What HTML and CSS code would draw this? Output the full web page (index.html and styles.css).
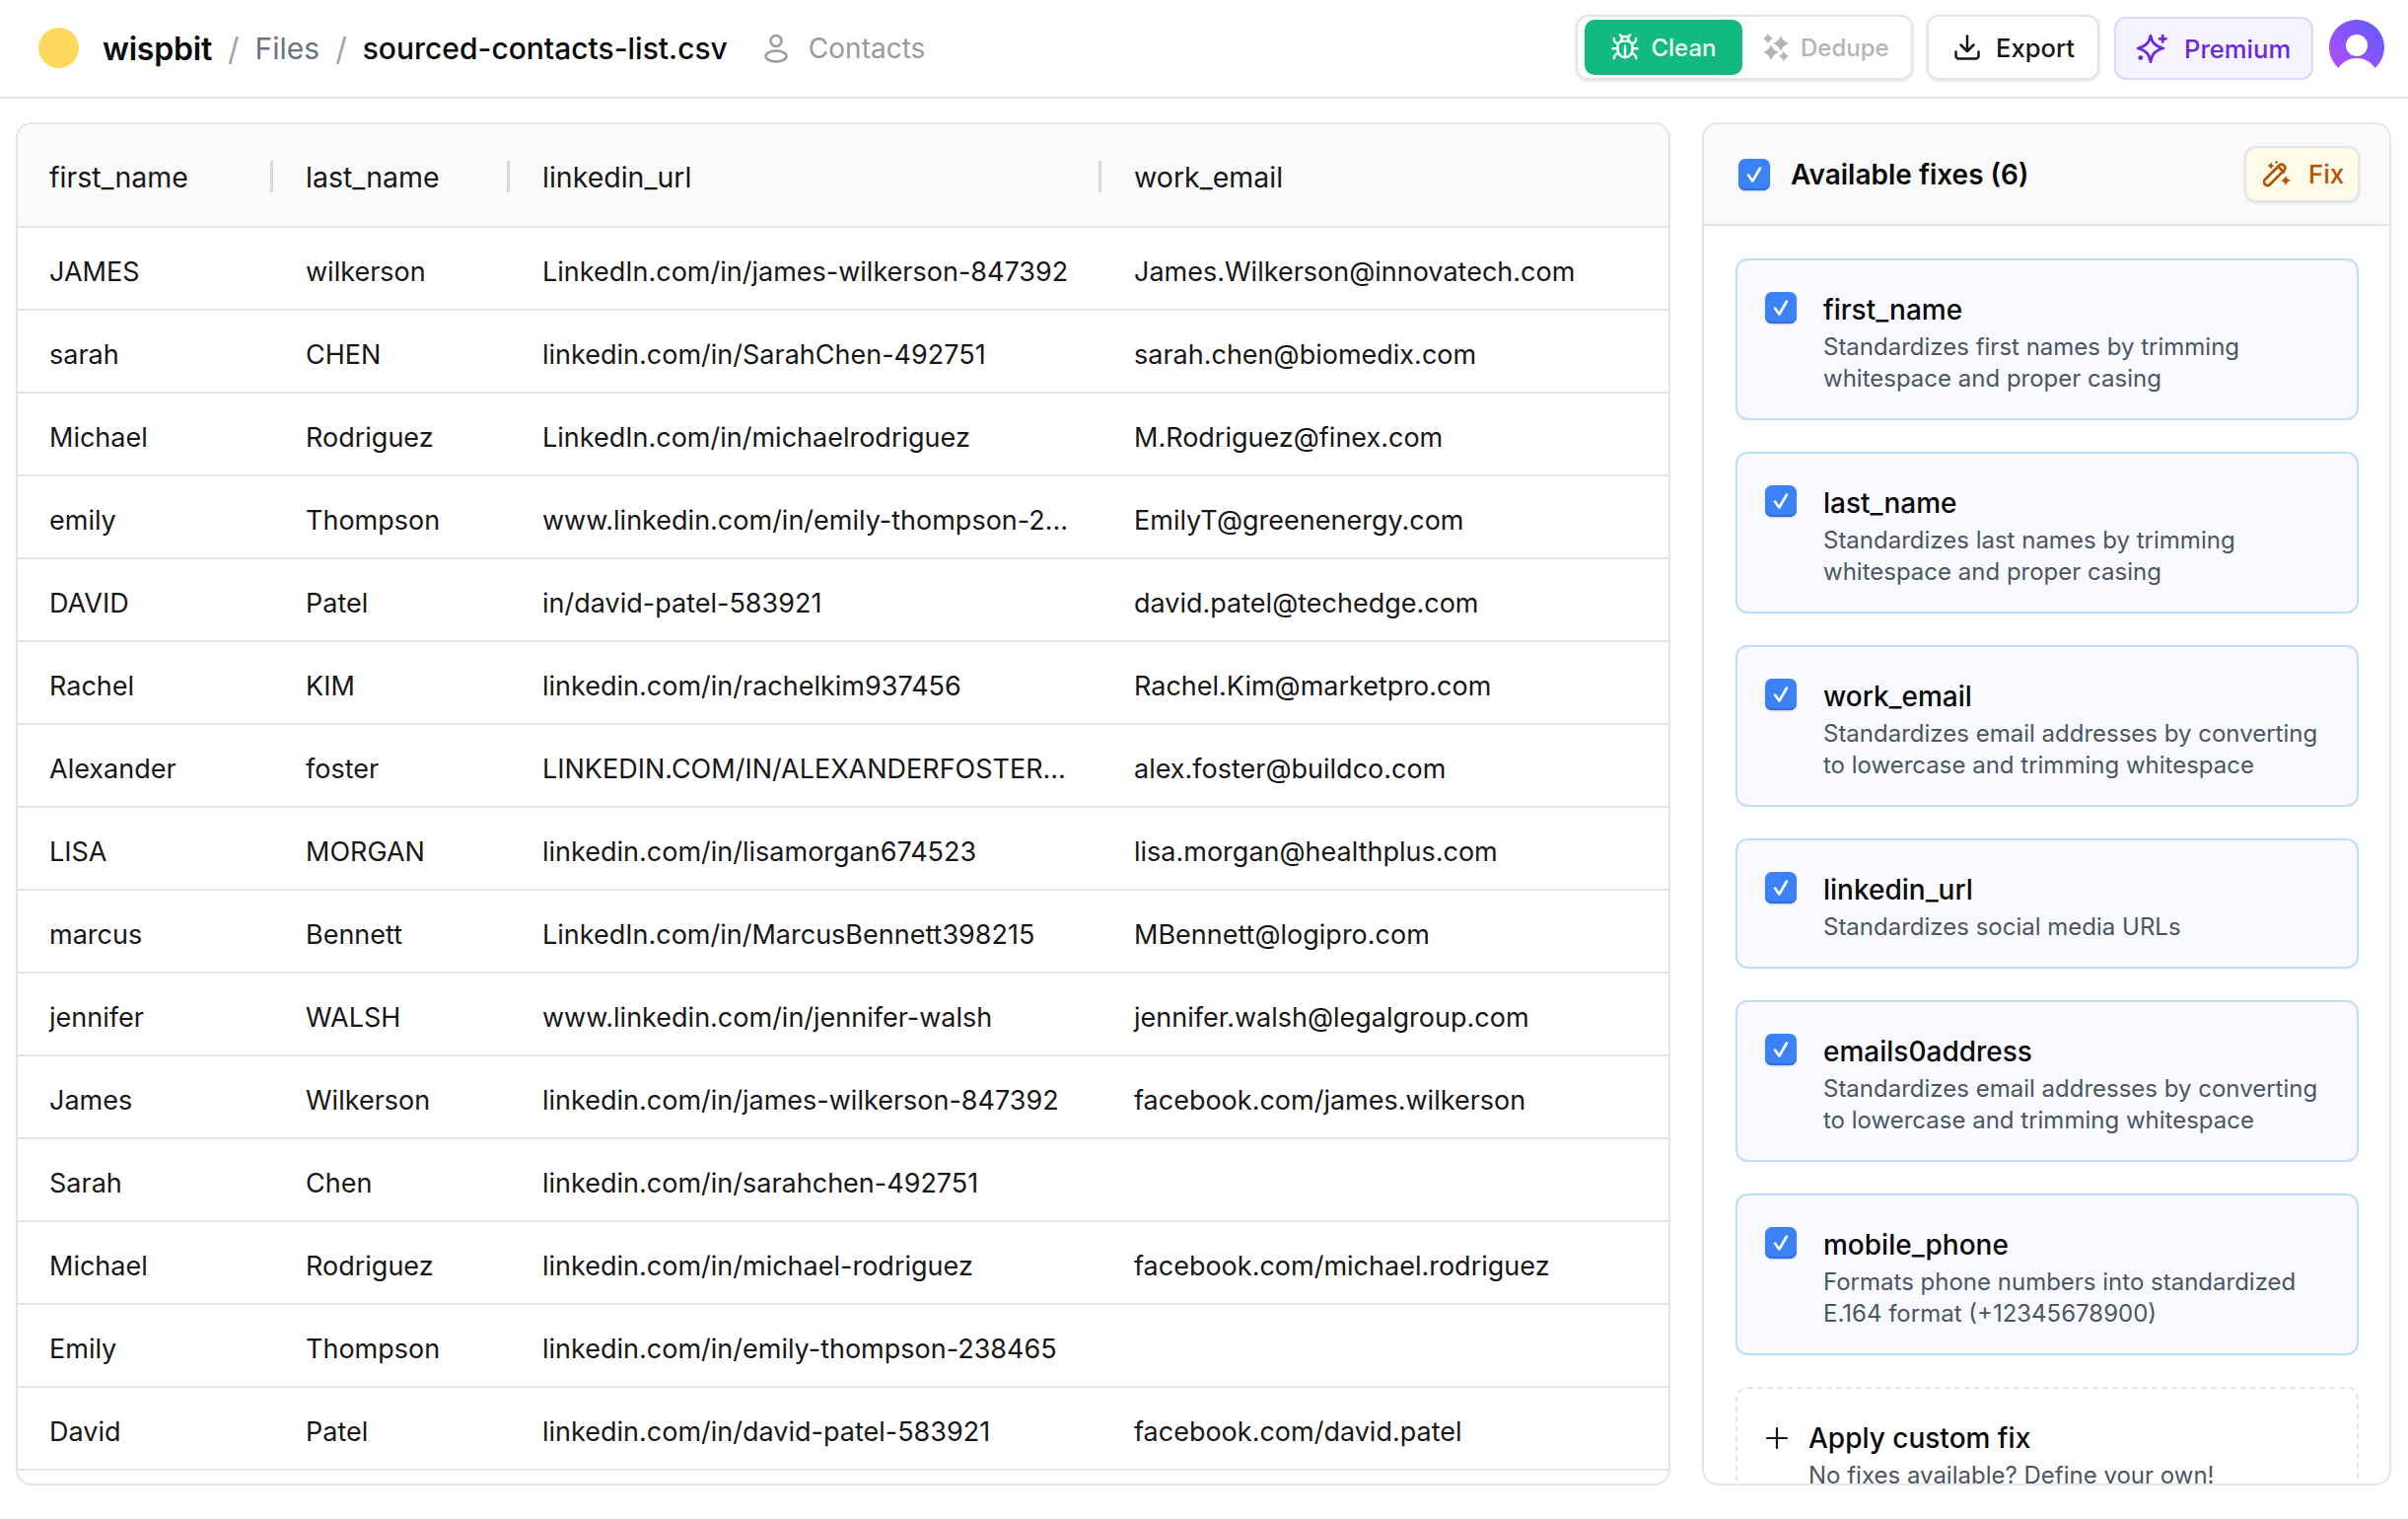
FILE: index.html
```html
<!DOCTYPE html>
<html>

<head>
    <meta charset="utf-8" />
    <title>sourced-contacts-list.csv</title>
    <link rel="stylesheet" href="styles.css">
</head>

<body>

<header class="topbar">
    <div class="crumbs">
        <span class="logo"></span>
        <span class="brand">wispbit</span>
        <span class="slash">/</span>
        <span class="crumb-link">Files</span>
        <span class="slash">/</span>
        <span class="crumb-file">sourced-contacts-list.csv</span>
        <span class="contacts">
            <svg class="icon-user" viewBox="0 0 24 30" fill="none" stroke="currentColor" stroke-width="2.400">
                <circle cx="12" cy="7.500" r="5.500"/>
                <ellipse cx="12" cy="23" rx="10.500" ry="5.500"/>
            </svg>
            Contacts
        </span>
    </div>
    <div class="actions">
        <div class="toggle">
            <div class="toggle-on">
                <svg class="icon-bug" viewBox="0 0 24 24" fill="none" stroke="currentColor" stroke-width="2" stroke-linecap="round" stroke-linejoin="round">
                    <path d="m8 2 1.880 1.880"/><path d="M14.120 3.880 16 2"/><path d="M9 7.130v-1a3 3 0 1 1 6 0v1"/>
                    <path d="M12 20c-3.300 0-6-2.700-6-6v-3a4 4 0 0 1 4-4h4a4 4 0 0 1 4 4v3c0 3.300-2.700 6-6 6"/>
                    <path d="M12 20v-9"/><path d="M6.530 9C4.600 8.800 3 7.100 3 5"/><path d="M6 13H2"/><path d="M3 21c0-2.100 1.700-3.900 3.800-4"/>
                    <path d="M20.970 5c0 2.100-1.600 3.800-3.500 4"/><path d="M22 13h-4"/><path d="M17.200 17c2.100.1 3.800 1.900 3.800 4"/>
                </svg>
                Clean
            </div>
            <div class="toggle-off">
                <svg class="icon-dedupe" viewBox="0 0 26 28" fill="currentColor">
                    <path d="M5 0Q6.500 3.500 10 5 6.500 6.500 5 10 3.500 6.500 0 5 3.500 3.500 5 0z"/>
                    <path d="M18 2Q20 8 26 10 20 12 18 18 16 12 10 10 16 8 18 2z"/>
                    <path d="M8 11Q10 17 16 19 10 21 8 27 6 21 0 19 6 17 8 11z"/>
                    <path d="M21 18Q22.500 21.500 26 23 22.500 24.500 21 28 19.500 24.500 16 23 19.500 21.500 21 18z"/>
                </svg>
                Dedupe
            </div>
        </div>
        <div class="btn btn-export">
            <svg class="icon-export" viewBox="0 0 26 26" fill="none" stroke="currentColor" stroke-width="2.500" stroke-linecap="round" stroke-linejoin="round">
                <path d="M13 1.500v15"/><path d="m6.500 10.500 6.500 6.500 6.500-6.500"/>
                <path d="M1.500 17.500v4a3 3 0 0 0 3 3h17a3 3 0 0 0 3-3v-4"/>
            </svg>
            Export
        </div>
        <div class="btn btn-premium">
            <svg class="icon-premium" viewBox="0 0 30 30" fill="none" stroke="currentColor" stroke-width="2.600" stroke-linecap="round" stroke-linejoin="round">
                <path d="M14 3C15.500 10 18.500 13 26 15 18.500 17 15.500 20 14 28 12.500 20 9.500 17 2 15 9.500 13 12.500 10 14 3z"/>
                <path d="M25.500 3v6M22.500 6h6"/>
                <circle cx="4.500" cy="24" r="1" fill="currentColor"/>
            </svg>
            Premium
        </div>
        <svg class="avatar" viewBox="0 0 56 50">
            <defs>
                <linearGradient id="avatarFill" x1="0" y1="1" x2="1" y2="0">
                    <stop offset="0" stop-color="#b44df5"/>
                    <stop offset="1" stop-color="#5b5cff"/>
                </linearGradient>
            </defs>
            <path fill="url(#avatarFill)" d="M9.500 49A28 28 0 1 1 46.500 49C42 42 35 39 28 39S14 42 9.500 49z"/>
            <circle cx="28" cy="26" r="11" fill="#fff"/>
        </svg>
    </div>
</header>

<main class="content">
    <section class="panel table-panel">
        <table class="sheet">
            <colgroup>
                <col class="col-first"><col class="col-last"><col class="col-url"><col>
            </colgroup>
            <thead>
                <tr>
                    <th><div class="th-in">first_name<i></i></div></th>
                    <th><div class="th-in">last_name<i></i></div></th>
                    <th><div class="th-in">linkedin_url<i></i></div></th>
                    <th><div class="th-in">work_email</div></th>
                </tr>
            </thead>
            <tbody>
                <tr><td>JAMES</td><td>wilkerson</td><td>LinkedIn.com/in/james-wilkerson-847392</td><td>James.Wilkerson@innovatech.com</td></tr>
                <tr><td>sarah</td><td>CHEN</td><td>linkedin.com/in/SarahChen-492751</td><td>sarah.chen@biomedix.com</td></tr>
                <tr><td>Michael</td><td>Rodriguez</td><td>LinkedIn.com/in/michaelrodriguez</td><td>M.Rodriguez@finex.com</td></tr>
                <tr><td>emily</td><td>Thompson</td><td>www.linkedin.com/in/emily-thompson-238465</td><td>EmilyT@greenenergy.com</td></tr>
                <tr><td>DAVID</td><td>Patel</td><td>in/david-patel-583921</td><td>david.patel@techedge.com</td></tr>
                <tr><td>Rachel</td><td>KIM</td><td>linkedin.com/in/rachelkim937456</td><td>Rachel.Kim@marketpro.com</td></tr>
                <tr><td>Alexander</td><td>foster</td><td>LINKEDIN.COM/IN/ALEXANDERFOSTER165</td><td>alex.foster@buildco.com</td></tr>
                <tr><td>LISA</td><td>MORGAN</td><td>linkedin.com/in/lisamorgan674523</td><td>lisa.morgan@healthplus.com</td></tr>
                <tr><td>marcus</td><td>Bennett</td><td>LinkedIn.com/in/MarcusBennett398215</td><td>MBennett@logipro.com</td></tr>
                <tr><td>jennifer</td><td>WALSH</td><td>www.linkedin.com/in/jennifer-walsh</td><td>jennifer.walsh@legalgroup.com</td></tr>
                <tr><td>James</td><td>Wilkerson</td><td>linkedin.com/in/james-wilkerson-847392</td><td>facebook.com/james.wilkerson</td></tr>
                <tr><td>Sarah</td><td>Chen</td><td>linkedin.com/in/sarahchen-492751</td><td></td></tr>
                <tr><td>Michael</td><td>Rodriguez</td><td>linkedin.com/in/michael-rodriguez</td><td>facebook.com/michael.rodriguez</td></tr>
                <tr><td>Emily</td><td>Thompson</td><td>linkedin.com/in/emily-thompson-238465</td><td></td></tr>
                <tr><td>David</td><td>Patel</td><td>linkedin.com/in/david-patel-583921</td><td>facebook.com/david.patel</td></tr>
            </tbody>
        </table>
    </section>

    <aside class="panel fixes-panel">
        <div class="fixes-head">
            <div class="fixes-title">
                <span class="check"><svg viewBox="0 0 24 24"><path d="M6.500 12.500 10.500 18 17.500 6"/></svg></span>
                Available fixes (6)
            </div>
            <div class="btn-fix">
                <svg class="icon-wand" viewBox="0 0 28 28" fill="none" stroke="currentColor" stroke-width="2.700" stroke-linecap="round" stroke-linejoin="round">
                    <rect x="-2" y="-3.500" width="27" height="7" rx="3" transform="translate(3.500 22.500) rotate(-45)"/>
                    <path d="m17 7.500 4 4"/>
                    <path fill="currentColor" stroke="none" d="M8 1.500Q8.800 4.200 11.500 5 8.800 5.800 8 8.500 7.200 5.800 4.500 5 7.200 4.200 8 1.500z"/>
                    <path fill="currentColor" stroke="none" d="M23 15Q24.200 18.800 28 20 24.200 21.200 23 25 21.800 21.200 18 20 21.800 18.800 23 15z"/>
                    <circle cx="13.500" cy="1.500" r="1.200" fill="currentColor" stroke="none"/>
                </svg>
                Fix
            </div>
        </div>
        <div class="fixes-list">
            <div class="fix-card">
                <span class="check"><svg viewBox="0 0 24 24"><path d="M6.500 12.500 10.500 18 17.500 6"/></svg></span>
                <div>
                    <div class="fix-name">first_name</div>
                    <div class="fix-desc">Standardizes first names by trimming<br>whitespace and proper casing</div>
                </div>
            </div>
            <div class="fix-card">
                <span class="check"><svg viewBox="0 0 24 24"><path d="M6.500 12.500 10.500 18 17.500 6"/></svg></span>
                <div>
                    <div class="fix-name">last_name</div>
                    <div class="fix-desc">Standardizes last names by trimming<br>whitespace and proper casing</div>
                </div>
            </div>
            <div class="fix-card">
                <span class="check"><svg viewBox="0 0 24 24"><path d="M6.500 12.500 10.500 18 17.500 6"/></svg></span>
                <div>
                    <div class="fix-name">work_email</div>
                    <div class="fix-desc">Standardizes email addresses by converting<br>to lowercase and trimming whitespace</div>
                </div>
            </div>
            <div class="fix-card">
                <span class="check"><svg viewBox="0 0 24 24"><path d="M6.500 12.500 10.500 18 17.500 6"/></svg></span>
                <div>
                    <div class="fix-name">linkedin_url</div>
                    <div class="fix-desc">Standardizes social media URLs</div>
                </div>
            </div>
            <div class="fix-card">
                <span class="check"><svg viewBox="0 0 24 24"><path d="M6.500 12.500 10.500 18 17.500 6"/></svg></span>
                <div>
                    <div class="fix-name">emails0address</div>
                    <div class="fix-desc">Standardizes email addresses by converting<br>to lowercase and trimming whitespace</div>
                </div>
            </div>
            <div class="fix-card">
                <span class="check"><svg viewBox="0 0 24 24"><path d="M6.500 12.500 10.500 18 17.500 6"/></svg></span>
                <div>
                    <div class="fix-name">mobile_phone</div>
                    <div class="fix-desc">Formats phone numbers into standardized<br>E.164 format (+12345678900)</div>
                </div>
            </div>
            <div class="custom-card">
                <svg class="icon-plus" viewBox="0 0 24 24" fill="none" stroke="currentColor" stroke-width="2.200" stroke-linecap="round">
                    <path d="M12 2v20M2 12h20"/>
                </svg>
                <div>
                    <div class="fix-name">Apply custom fix</div>
                    <div class="fix-desc">No fixes available? Define your own!</div>
                </div>
            </div>
        </div>
    </aside>
</main>

</body>

</html>
```

FILE: styles.css
```css
* {
    padding: 0;
    margin: 0;
    box-sizing: border-box;
}

body {
    width: 2442px;
    height: 1540px;
    overflow: hidden;
    background: #fff;
    font-family: Inter, "Liberation Sans", sans-serif;
    color: #171717;
}

/* top bar */
.topbar {
    height: 100px;
    border-bottom: 2px solid #e5e5e5;
    display: flex;
    justify-content: space-between;
    align-items: center;
    padding: 0 24px 2px 39px;
}

.crumbs {
    display: flex;
    align-items: center;
    padding-top: 2px;
    font-size: 30px;
}

.logo {
    width: 41px;
    height: 41px;
    border-radius: 50%;
    background: #fcd95c;
    margin-right: 24px;
    margin-top: -2px;
}

.brand {
    font-size: 32px;
    font-weight: 600;
    letter-spacing: -0.200px;
    color: #0a0a0a;
}

.slash {
    font-size: 32px;
    color: #9ca3af;
    margin: 0 16px;
}

.crumb-link {
    color: #6b7280;
}

.crumb-file {
    font-weight: 500;
    color: #0a0a0a;
}

.contacts {
    display: flex;
    align-items: center;
    margin-left: 37px;
    font-size: 28px;
    color: #9a9a9a;
}

.icon-user {
    width: 24px;
    height: 30px;
    margin-right: 21px;
}

.actions {
    display: flex;
    align-items: center;
}

.toggle {
    width: 342px;
    height: 66px;
    border: 2px solid #e5e5e5;
    border-radius: 12px;
    box-shadow: 0 1px 3px rgba(0, 0, 0, 0.15);
    padding: 4px 7px;
    display: flex;
    align-items: center;
    font-size: 24px;
    font-weight: 500;
}

.toggle-on {
    width: 160px;
    height: 56px;
    background: #13b981;
    color: #ecfdf5;
    border-radius: 10px;
    display: flex;
    align-items: center;
    justify-content: center;
    gap: 11px;
}

.icon-bug {
    width: 30px;
    height: 30px;
}

.toggle-off {
    display: flex;
    align-items: center;
    gap: 12px;
    margin-left: 21px;
    color: #b4b4b4;
}

.icon-dedupe {
    width: 26px;
    height: 28px;
}

.btn {
    height: 66px;
    border-radius: 12px;
    display: flex;
    align-items: center;
    font-size: 25.600px;
    font-weight: 500;
}

.btn-export {
    width: 175px;
    margin-left: 14px;
    padding-left: 26px;
    gap: 16px;
    border: 2px solid #e5e5e5;
    box-shadow: 0 1px 3px rgba(0, 0, 0, 0.15);
}

.icon-export {
    width: 26px;
    height: 26px;
}

.btn-premium {
    width: 202px;
    height: 64px;
    margin-left: 15px;
    margin-top: 2px;
    padding-left: 20px;
    gap: 17px;
    background: #f5f3ff;
    border: 2px solid #ddd6fe;
    color: #6d28d9;
}

.icon-premium {
    width: 32px;
    height: 32px;
}

.avatar {
    width: 56px;
    height: 50px;
    margin-left: 16px;
    margin-top: -6px;
}

/* panels */
.content {
    height: 1440px;
    padding: 24px 17px 34px 16px;
    display: flex;
    justify-content: space-between;
}

.panel {
    border: 2px solid #e5e5e5;
    border-radius: 16px;
    overflow: hidden;
}

.table-panel {
    width: 1678px;
}

.fixes-panel {
    width: 699px;
}

/* table */
.sheet {
    width: 100%;
    table-layout: fixed;
    border-collapse: separate;
    border-spacing: 0;
    font-size: 27px;
}

.col-first {
    width: 260px;
}

.col-last {
    width: 240px;
}

.col-url {
    width: 600px;
}

.sheet th {
    height: 105px;
    padding-top: 3px;
    background: #fafafa;
    border-bottom: 2px solid #e5e5e5;
    font-size: 28.500px;
    font-weight: 400;
    text-align: left;
}

.th-in {
    display: flex;
    align-items: center;
    justify-content: space-between;
    padding: 0 1px 0 32px;
    color: #171717;
}

.th-in i {
    width: 3px;
    height: 32px;
    background: #d9d9d9;
}

.sheet td {
    height: 84px;
    border-bottom: 2px solid #e5e5e5;
    padding: 6px 32px 0;
    white-space: nowrap;
    overflow: hidden;
    text-overflow: ellipsis;
}

/* fixes */
.fixes-head {
    height: 103px;
    background: #fafafa;
    border-bottom: 2px solid #e5e5e5;
    display: flex;
    align-items: center;
    justify-content: space-between;
    padding: 0 30px 0 35px;
}

.fixes-title {
    display: flex;
    align-items: center;
    gap: 21px;
    font-size: 28px;
    font-weight: 600;
    color: #0a0a0a;
}

.check {
    flex: none;
    width: 32px;
    height: 32px;
    border-radius: 7px;
    background: #3b82f6;
    box-shadow: inset 0 -2px 0 #2f6fd8, 0 1px 2px rgba(0, 0, 0, 0.2);
    display: flex;
    align-items: center;
    justify-content: center;
}

.check svg {
    width: 26px;
    height: 26px;
    fill: none;
    stroke: #fff;
    stroke-width: 2.400;
    stroke-linecap: round;
    stroke-linejoin: round;
}

.btn-fix {
    width: 117px;
    height: 57px;
    background: #fefbe8;
    border: 2px solid #e5e5e5;
    border-radius: 12px;
    box-shadow: 0 1px 3px rgba(0, 0, 0, 0.12);
    display: flex;
    align-items: center;
    gap: 18px;
    padding-left: 17px;
    font-size: 26px;
    font-weight: 500;
    color: #b45309;
}

.icon-wand {
    width: 28px;
    height: 28px;
}

.fixes-list {
    padding: 33px 31px 0 32px;
    display: flex;
    flex-direction: column;
    gap: 32px;
}

.fix-card {
    border: 2px solid #bfdbfe;
    border-radius: 12px;
    background: #f8faff;
    padding: 30px 28px 24px;
    display: flex;
    gap: 27px;
}

.fix-card .check {
    margin-top: 2px;
}

.fix-name {
    font-size: 28px;
    line-height: 40px;
    font-weight: 500;
    color: #0a0a0a;
}

.fix-desc {
    margin-top: 2px;
    font-size: 24px;
    line-height: 32px;
    color: #4b5563;
}

.custom-card {
    border: 2px dashed #e5e5e5;
    border-radius: 12px;
    padding: 30px 28px 24px;
    display: flex;
    gap: 20px;
}

.icon-plus {
    flex: none;
    width: 24px;
    height: 24px;
    margin-top: 8px;
}
```
